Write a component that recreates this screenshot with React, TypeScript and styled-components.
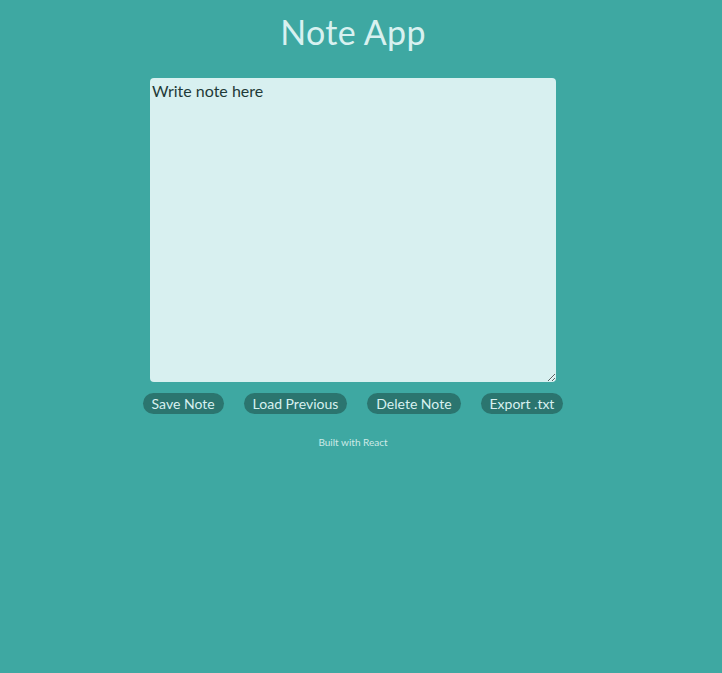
import React, { useEffect, useRef } from "react";
import styled, { createGlobalStyle } from "styled-components";

const Global = createGlobalStyle`
  html, body {
    margin: 0;
    padding: 0;
    background: #3ea8a2;
    font-family: "Lato", "Noto Sans", sans-serif;
  }
`;

const Page = styled.div`
  display: flex;
  flex-direction: column;
  align-items: center;
  padding-right: 16px;
  min-height: 673px;
  box-sizing: border-box;
`;

const Title = styled.h1`
  margin: 12px 0 0;
  height: 66px;
  font-size: 34px;
  line-height: 40px;
  font-weight: 400;
  letter-spacing: 0.3px;
  color: #d8f1f0;
`;

const Note = styled.textarea`
  box-sizing: border-box;
  width: 406px;
  height: 304px;
  border: none;
  border-radius: 4px;
  padding: 3px 2px;
  background: #d8f0f0;
  color: #1f3a38;
  caret-color: #1f3a38;
  font-family: inherit;
  font-size: 16px;
  line-height: 20px;
  outline: none;
  resize: both;
`;

const Actions = styled.div`
  display: flex;
  gap: 20px;
  margin-top: 11px;
`;

const Btn = styled.button`
  height: 21px;
  padding: 0 9px;
  border: none;
  border-radius: 11px;
  background: #2b756f;
  color: #d8f1f0;
  font-family: inherit;
  font-size: 14px;
  line-height: 21px;
  cursor: pointer;
`;

const Footer = styled.div`
  margin-top: 22px;
  font-size: 10px;
  color: #cdeae7;
`;

export default function App() {
  const ref = useRef<HTMLTextAreaElement>(null);
  useEffect(() => {
    const el = ref.current;
    if (el) {
      el.focus();
      el.setSelectionRange(el.value.length, el.value.length);
    }
  }, []);
  return (
    <>
      <Global />
      <Page>
        <Title>Note App</Title>
        <Note ref={ref} defaultValue="Write note here" />
        <Actions>
          <Btn>Save Note</Btn>
          <Btn>Load Previous</Btn>
          <Btn>Delete Note</Btn>
          <Btn>Export .txt</Btn>
        </Actions>
        <Footer>Built with React</Footer>
      </Page>
    </>
  );
}
